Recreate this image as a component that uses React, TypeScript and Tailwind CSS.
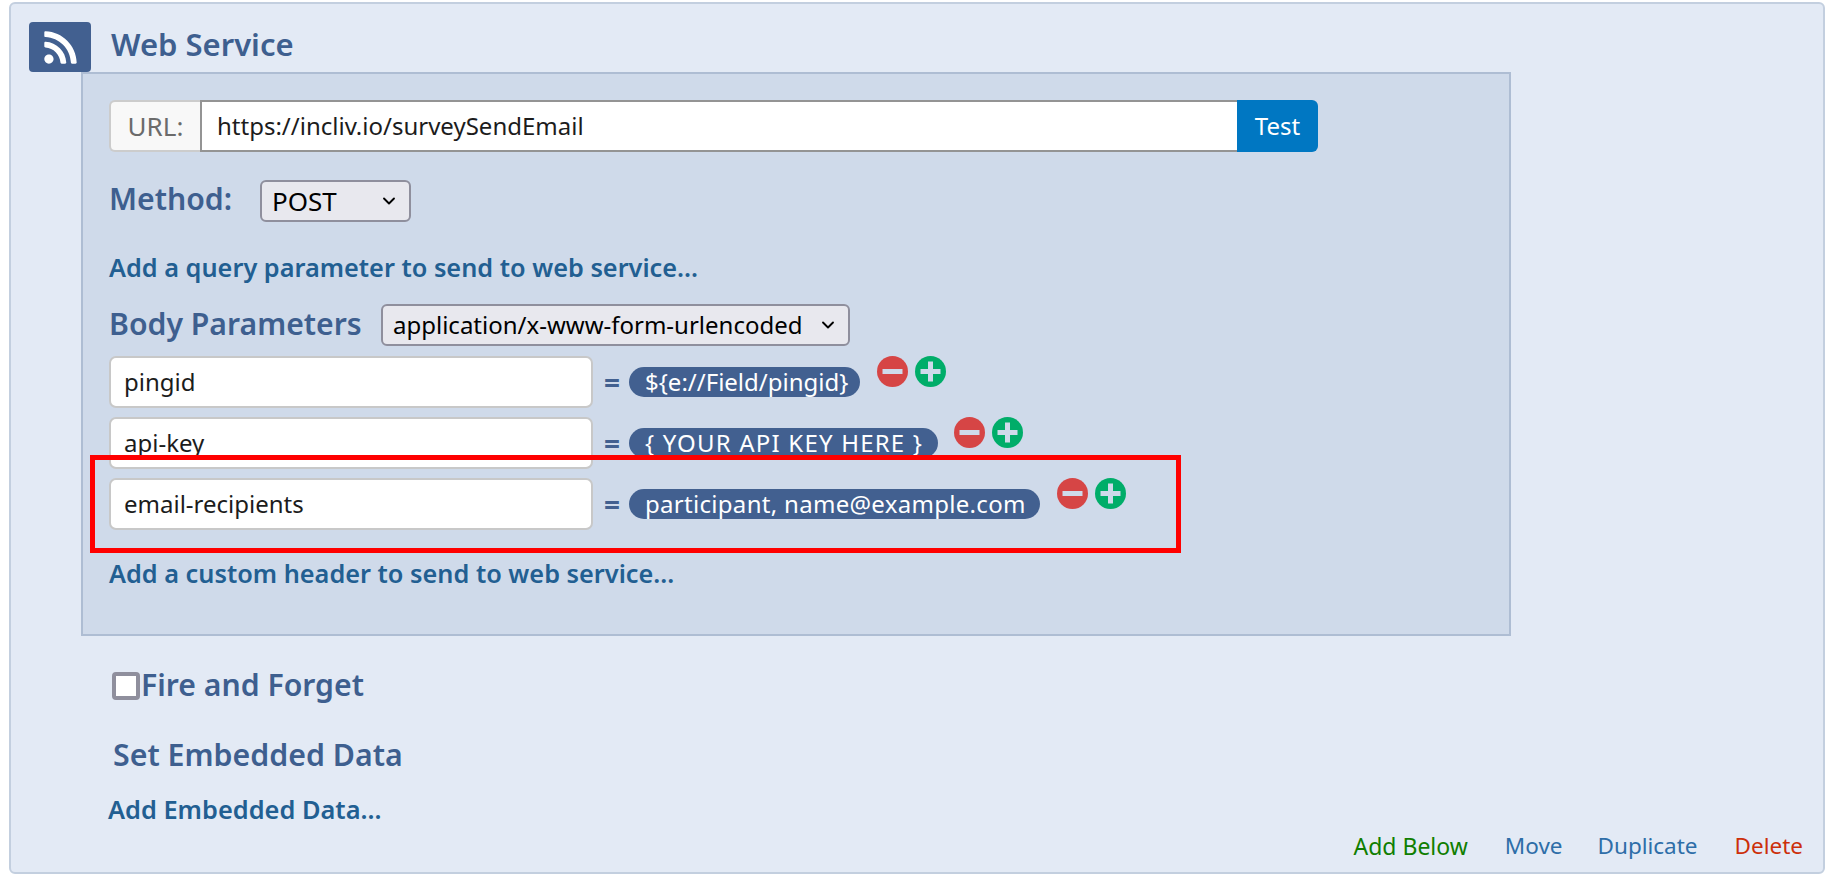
import React from 'react';
import { ChevronDown } from 'lucide-react';
import { FaRss } from 'react-icons/fa';

const rows = [
  { name: 'pingid', value: '${e://Field/pingid}', pill: 'w-[231px]', btn: 'ml-[17px]' },
  { name: 'api-key', value: '{ YOUR API KEY HERE }', pill: 'w-[309px] tracking-[1.2px]', btn: 'ml-[16px]' },
  { name: 'email-recipients', value: 'participant, name@example.com', pill: 'w-[411px] tracking-[0.3px]', btn: 'ml-[17px]' },
];

function RoundButton({ kind }: { kind: 'minus' | 'plus' }) {
  return (
    <svg width="31" height="31" viewBox="0 0 31 31" className="block shrink-0">
      <circle cx="15.5" cy="15.5" r="15.5" fill={kind === 'minus' ? '#d64545' : '#00ad69'} />
      <rect x="5.5" y="13" width="20" height="5" fill="#cfdaea" />
      {kind === 'plus' && <rect x="13" y="5.5" width="5" height="20" fill="#cfdaea" />}
    </svg>
  );
}

export default function App() {
  return (
    <div className="bg-white h-[888px] pt-[2px] pl-[9px] font-['Noto_Sans',sans-serif] relative overflow-hidden">
      <div className="w-[1816px] h-[872px] bg-[#e3eaf5] border-2 border-[#c3cfdf] rounded-[6px] flex flex-col">
        {/* header */}
        <div className="flex items-center mt-[18px] ml-[18px] h-[50px]">
          <div className="w-[62px] h-[50px] bg-[#426090] rounded-[4px] flex items-center justify-center text-white">
            <FaRss size={37} />
          </div>
          <div className="ml-[20px] mb-[7px] text-[31px] leading-[36px] font-semibold text-[#3e5f8f]">Web Service</div>
        </div>

        {/* web service box */}
        <div className="ml-[70px] w-[1430px] h-[564px] bg-[#cfdaea] border-2 border-[#aebdd3] px-[26px] pt-[26px]">
          <div className="flex w-[1209px] h-[52px] text-[24px]">
            <div className="w-[91px] bg-[#f8f8f8] border-2 border-r-0 border-[#cccccc] rounded-l-[6px] text-[#6b6b6b] text-[26px] flex items-center justify-center">URL:</div>
            <div className="flex-1 bg-white border-y-2 border-l-2 border-[#949494] text-[#1c1c1c] flex items-center pl-[15px]">https://incliv.io/surveySendEmail</div>
            <div className="w-[81px] bg-[#0077c2] text-white rounded-r-[6px] flex items-center justify-center">Test</div>
          </div>

          <div className="flex items-center mt-[28px] h-[42px]">
            <div className="w-[151px] mb-[4px] text-[30.2px] font-semibold text-[#3e5f8f]">Method:</div>
            <div className="w-[151px] h-[42px] bg-[#e8e8ee] border-2 border-[#8f8f9d] rounded-[6px] flex items-center justify-between pl-[10px] pr-[10px] text-[26px] text-black">
              POST
              <ChevronDown size={20} strokeWidth={2.25} />
            </div>
          </div>

          <div className="mt-[30px] h-[30px] leading-[30px] text-[25.3px] font-semibold text-[#225f92]">Add a query parameter to send to web service...</div>

          <div className="flex items-center mt-[22px] h-[42px]">
            <div className="w-[272px] mb-[2px] text-[30.2px] font-semibold text-[#3e5f8f]">Body Parameters</div>
            <div className="w-[469px] h-[42px] bg-[#e8e8ee] border-2 border-[#8f8f9d] rounded-[6px] flex items-center justify-between pl-[10px] pr-[10px] text-[24px] text-black">
              application/x-www-form-urlencoded
              <ChevronDown size={20} strokeWidth={2.25} />
            </div>
          </div>

          <div className="mt-[10px] flex flex-col gap-[9px]">
            {rows.map((row) => (
              <div key={row.name} className="flex items-start h-[52px]">
                <div className="w-[484px] h-[52px] bg-white border-2 border-[#c8c8c8] rounded-[7px] flex items-center pl-[13px] text-[24px] text-[#1c1c1c]">{row.name}</div>
                <div className="ml-[11px] w-[25px] mt-[11px] h-[30px] leading-[30px] text-[28px] font-bold text-[#426090]">=</div>
                <div className={`${row.pill} mt-[11px] h-[30px] bg-[#426090] rounded-[15px] text-white text-[24px] leading-[30px] whitespace-nowrap pl-[16px]`}>{row.value}</div>
                <div className={`${row.btn} flex gap-[7px]`}>
                  <RoundButton kind="minus" />
                  <RoundButton kind="plus" />
                </div>
              </div>
            ))}
          </div>

          <div className="mt-[28px] h-[30px] leading-[30px] text-[25.3px] font-semibold text-[#225f92]">Add a custom header to send to web service...</div>
        </div>

        {/* below the box */}
        <div className="flex items-center ml-[101px] mt-[36px] h-[28px]">
          <div className="w-[28px] h-[28px] bg-white border-[4px] border-[#8f8f9d] rounded-[4px]"></div>
          <div className="ml-px mb-[2px] text-[30.2px] font-semibold text-[#3e5f8f]">Fire and Forget</div>
        </div>
        <div className="ml-[102px] mt-[38px] h-[34px] leading-[34px] text-[30.3px] font-semibold text-[#3e5f8f]">Set Embedded Data</div>
        <div className="ml-[97px] mt-[23px] h-[28px] leading-[28px] text-[25.4px] font-semibold text-[#225f92]">Add Embedded Data...</div>

        <div className="mt-[10px] h-[26px] leading-[26px] flex justify-end pr-[20px] text-[22.5px]">
          <span className="text-[#107e00] text-[23px]">Add Below</span>
          <span className="ml-[37px] text-[#2e6ea8]">Move</span>
          <span className="ml-[35px] text-[#2e6ea8]">Duplicate</span>
          <span className="ml-[37px] text-[#cc2f0a]">Delete</span>
        </div>
      </div>

      {/* red annotation */}
      <div className="absolute left-[90px] top-[455px] w-[1091px] h-[98px] border-[5px] border-[#ff0000]"></div>
    </div>
  );
}
